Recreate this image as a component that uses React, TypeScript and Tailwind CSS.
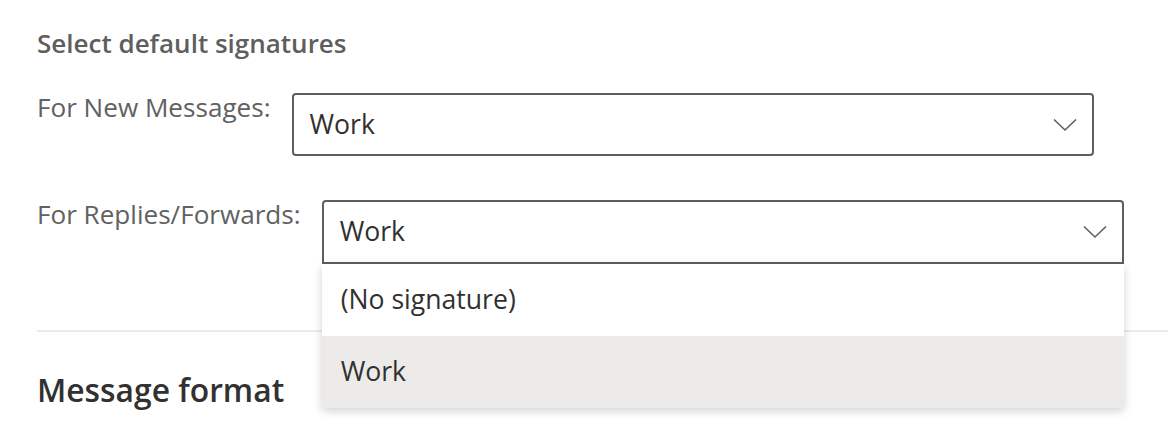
import { useState } from 'react';

const Chevron = () => (
  <svg width="24" height="14" viewBox="0 0 24 14" fill="none" xmlns="http://www.w3.org/2000/svg">
    <path d="M1 1.5L12 12L23 1.5" stroke="#5f5f5f" strokeWidth="1.6" />
  </svg>
);

const options = ['(No signature)', 'Work'];

const App = () => {
  const [selected] = useState('Work');

  return (
    <div
      className="relative h-[430px] w-[1168px] overflow-hidden bg-white pl-[37px]"
      style={{ fontFamily: '"Open Sans", "Noto Sans", sans-serif' }}
    >
      <h3 className="pt-[26px] text-[26px] leading-[34px] font-semibold text-[#605e5c]">
        Select default signatures
      </h3>

      <div className="mt-[33px] flex items-start gap-[21px]">
        <span className="-mt-[3px] text-[26.1px] leading-[34px] text-[#616161]">For New Messages:</span>
        <div className="flex h-[63px] w-[802px] items-center justify-between rounded-[4px] border-2 border-[#5e5e5e] pr-[15px] pl-[16px]">
          <span className="text-[26.6px] text-[#323130]">{selected}</span>
          <Chevron />
        </div>
      </div>

      <div className="relative mt-[44px] flex items-start gap-[21px]">
        <span className="-mt-[3px] text-[26.1px] leading-[34px] text-[#616161]">For Replies/Forwards:</span>
        <div className="relative w-[802px]">
          <div className="flex h-[64px] items-center justify-between rounded-t-[4px] border-2 border-[#5e5e5e] pr-[15px] pl-[16px]">
            <span className="text-[26.6px] text-[#323130]">{selected}</span>
            <Chevron />
          </div>
          <ul className="absolute top-[64px] right-0 left-0 z-10 rounded-b-[3px] bg-white shadow-[0_3px_10px_rgba(0,0,0,0.18)]">
            {options.map((opt) => (
              <li
                key={opt}
                className={`flex h-[72px] items-center pl-[19px] text-[26.6px] text-[#323130] ${
                  opt === selected ? 'bg-[#edebe9]' : 'bg-white'
                }`}
              >
                {opt}
              </li>
            ))}
          </ul>
        </div>
      </div>

      <div className="mt-[66px] h-[2px] bg-[#ebebeb]" />

      <h2 className="mt-[39px] text-[31.8px] leading-[38px] font-semibold text-[#323130]">Message format</h2>
    </div>
  );
};

export default App;
